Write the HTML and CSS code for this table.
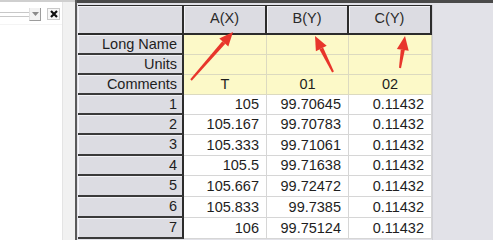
FILE: index.html
```html
<!DOCTYPE html>
<html>
<head>
<meta charset="utf-8">
<link rel="stylesheet" href="styles.css">
</head>
<body>
<div class="app">
  <aside class="side">
    <div class="side-main">
      <div class="toolbar">
        <div class="combo"><span class="combo-field"></span><span class="combo-btn"><svg width="7" height="4" viewBox="0 0 7 4"><path d="M0 0H7L3.5 4Z" fill="#8a8a8a"/></svg></span></div>
        <span class="close-btn"><svg width="8" height="8" viewBox="0 0 8 8"><path d="M1 1L7 7M7 1L1 7" stroke="#111" stroke-width="2.2"/></svg></span>
      </div>
    </div>
    <div class="side-strip"></div>
  </aside>
  <div class="divider"></div>
  <main class="sheet-area">
    <div class="sheet">
      <div class="c corner"></div>
      <div class="c colhead">A(X)</div>
      <div class="c colhead">B(Y)</div>
      <div class="c colhead">C(Y)</div>

      <div class="c rowhead">Long Name</div>
      <div class="c label"></div><div class="c label"></div><div class="c label"></div>
      <div class="c rowhead">Units</div>
      <div class="c label"></div><div class="c label"></div><div class="c label"></div>
      <div class="c rowhead">Comments</div>
      <div class="c label center">T</div><div class="c label center">01</div><div class="c label center">02</div>

      <div class="c rowhead">1</div><div class="c data">105</div><div class="c data">99.70645</div><div class="c data">0.11432</div>
      <div class="c rowhead">2</div><div class="c data">105.167</div><div class="c data">99.70783</div><div class="c data">0.11432</div>
      <div class="c rowhead">3</div><div class="c data">105.333</div><div class="c data">99.71061</div><div class="c data">0.11432</div>
      <div class="c rowhead">4</div><div class="c data">105.5</div><div class="c data">99.71638</div><div class="c data">0.11432</div>
      <div class="c rowhead">5</div><div class="c data">105.667</div><div class="c data">99.72472</div><div class="c data">0.11432</div>
      <div class="c rowhead">6</div><div class="c data">105.833</div><div class="c data">99.7385</div><div class="c data">0.11432</div>
      <div class="c rowhead">7</div><div class="c data">106</div><div class="c data">99.75124</div><div class="c data">0.11432</div>
    </div>
    <div class="filler"></div>
  </main>
  <svg class="arrows" width="493" height="240" viewBox="0 0 493 240">
    <g fill="#e8352b">
      <polygon points="191.75,80.66 225.3,43.8 222.3,41.2 190.25,79.34"/>
      <polygon points="233,32 228.3,46.4 219.3,38.6"/>
      <polygon points="333.9,71.55 323.1,47.6 319.5,49.4 332.1,72.45"/>
      <polygon points="315,36 326.7,45.8 315.9,51.2"/>
      <polygon points="401,68.15 404.8,50.1 400.8,49.5 399,67.85"/>
      <polygon points="405,36 408.7,50.7 396.9,48.9"/>
    </g>
  </svg>
</div>
</body>
</html>
```
FILE: styles.css
```css
html, body {
  margin: 0;
  padding: 0;
  width: 493px;
  height: 240px;
  overflow: hidden;
  background: #e2e2e8;
}
.app {
  position: relative;
  display: flex;
  width: 493px;
  height: 240px;
  font-family: "Liberation Sans", Arial, sans-serif;
  font-size: 14.5px;
  color: #1e1e1e;
}
.side {
  display: flex;
  width: 75px;
  flex: none;
  border-top: 2px solid #cfcfcf;
  box-sizing: border-box;
}
.side-main {
  width: 62px;
  background: #ffffff;
}
.side-strip {
  width: 13px;
  background: #f1f1f1;
  border-left: 1px solid #e4e4e4;
  box-sizing: border-box;
}
.toolbar {
  display: flex;
  align-items: center;
  gap: 6px;
  height: 20px;
  padding-top: 2px;
  border-bottom: 1px solid #f4f4f4;
}
.combo {
  display: flex;
  align-items: center;
  width: 41px;
}
.combo-field {
  width: 29px;
  height: 3px;
  border-top: 1px solid #c8c8c8;
  border-bottom: 1px solid #c8c8c8;
}
.combo-btn {
  display: flex;
  align-items: center;
  justify-content: center;
  width: 12px;
  height: 13px;
  box-sizing: border-box;
  background: #f2f2f2;
  border-right: 1px solid #9c9c9c;
  border-bottom: 1px solid #9c9c9c;
  border-left: 1px solid #e0e0e0;
}
.close-btn {
  display: flex;
  align-items: center;
  justify-content: center;
  width: 11px;
  height: 10px;
  border: 1px solid #c9c9c9;
  background: #f7f7f7;
}
.divider {
  width: 2px;
  flex: none;
  background: #5a5a5a;
}
.sheet-area {
  display: flex;
  flex: 1;
  padding-top: 2px;
  padding-left: 1px;
  border-top: 3px solid #4a4a4a;
  background: #e2e2e8;
}
.sheet {
  display: grid;
  grid-template-columns: 106px 83px 82px 83px;
  grid-template-rows: 30px 20px 20px 20px 20px 20px 21px 20px 21px 21px 21px;
  align-self: flex-start;
}
.filler {
  flex: 1;
  border-left: 1px solid #d0d0d6;
}
.c {
  box-sizing: border-box;
  display: flex;
  align-items: center;
  justify-content: flex-end;
  padding-right: 7px;
  white-space: nowrap;
  line-height: 1;
}
.corner, .colhead {
  background: #dcdce2;
  border-top: 1px solid #2c2c2c;
  border-right: 2px solid #2c2c2c;
  border-bottom: 2px solid #2c2c2c;
  box-shadow: inset 1px 1px 0 #f3f3f7;
}
.colhead {
  justify-content: center;
  padding-right: 0;
  padding-bottom: 2px;
  color: #2a2a2a;
}
.rowhead {
  background: #dcdce2;
  border-right: 2px solid #2c2c2c;
  border-bottom: 2px solid #3a3a3a;
  box-shadow: inset 1px 1px 0 #f3f3f7;
  padding-right: 5px;
}
.label {
  background: #fcf9c8;
  border-right: 1px solid #dcdac0;
  border-bottom: 1px solid #dcdac0;
}
.center {
  justify-content: center;
  padding-right: 0;
}
.data {
  background: #ffffff;
  border-right: 1px solid #d6d6d6;
  border-bottom: 1px solid #d6d6d6;
}
.arrows {
  position: absolute;
  left: 0;
  top: 0;
  pointer-events: none;
}
```
